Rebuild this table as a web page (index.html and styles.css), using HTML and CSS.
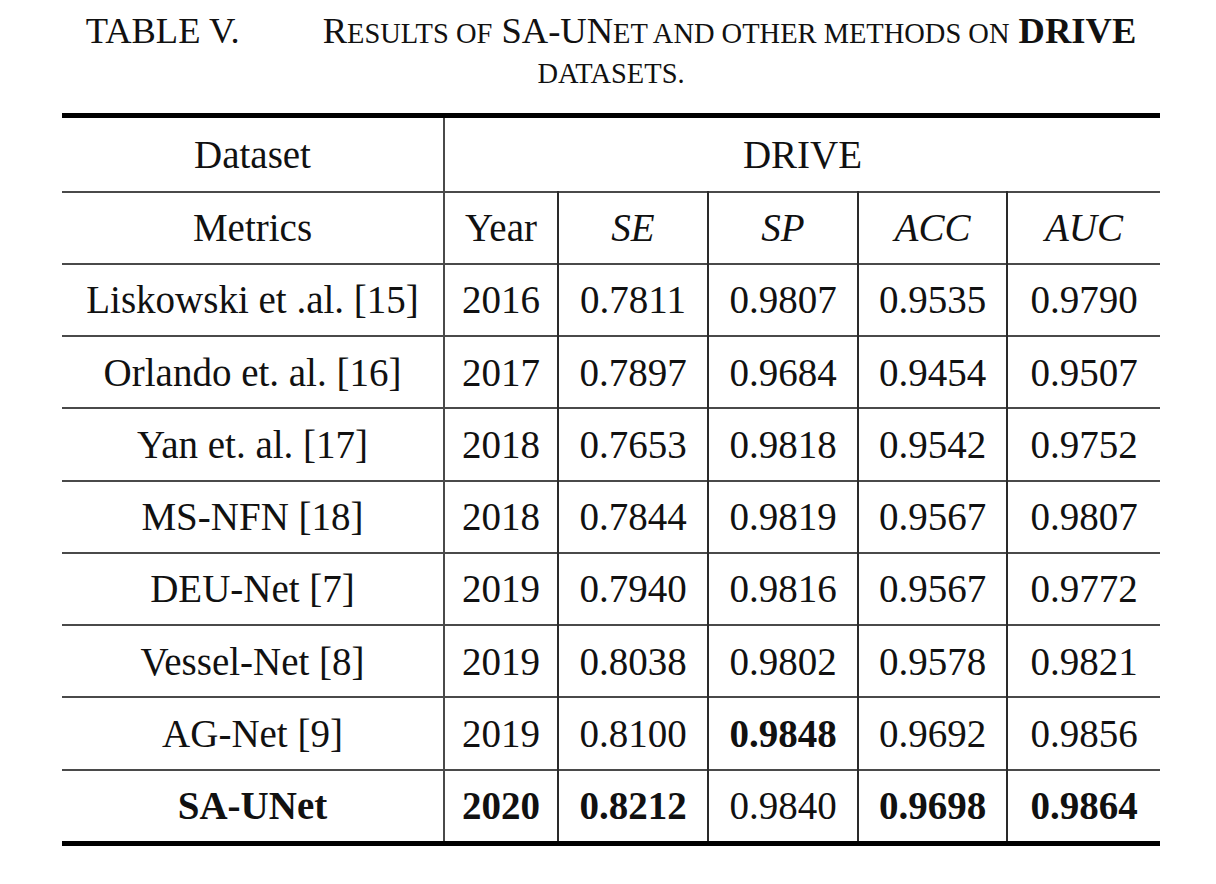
FILE: index.html
```html
<!DOCTYPE html>
<html>
<head>
<meta charset="utf-8">
<link rel="stylesheet" href="styles.css">
</head>
<body>
<div class="page">
  <div class="caption">
    <div class="cap-line"><span class="cap-label">TABLE V.</span><span class="cap-gap"></span>R<span class="sc">esults of</span> SA-UN<span class="sc">et and other methods on</span> <b>DRIVE</b></div>
    <div class="cap-line"><span class="sc">datasets.</span></div>
  </div>
  <table class="results">
    <colgroup>
      <col class="c-name"><col class="c-year"><col class="c-m"><col class="c-m"><col class="c-m3"><col class="c-m4">
    </colgroup>
    <tr class="head"><td class="vr">Dataset</td><td colspan="5">DRIVE</td></tr>
    <tr><td class="vr">Metrics</td><td class="vr2">Year</td><td class="vr2"><i>SE</i></td><td class="vr2"><i>SP</i></td><td class="vr2"><i>ACC</i></td><td><i>AUC</i></td></tr>
    <tr><td class="vr">Liskowski et .al. [15]</td><td class="vr2">2016</td><td class="vr2">0.7811</td><td class="vr2">0.9807</td><td class="vr2">0.9535</td><td>0.9790</td></tr>
    <tr><td class="vr">Orlando et. al. [16]</td><td class="vr2">2017</td><td class="vr2">0.7897</td><td class="vr2">0.9684</td><td class="vr2">0.9454</td><td>0.9507</td></tr>
    <tr><td class="vr">Yan et. al. [17]</td><td class="vr2">2018</td><td class="vr2">0.7653</td><td class="vr2">0.9818</td><td class="vr2">0.9542</td><td>0.9752</td></tr>
    <tr><td class="vr">MS-NFN [18]</td><td class="vr2">2018</td><td class="vr2">0.7844</td><td class="vr2">0.9819</td><td class="vr2">0.9567</td><td>0.9807</td></tr>
    <tr><td class="vr">DEU-Net [7]</td><td class="vr2">2019</td><td class="vr2">0.7940</td><td class="vr2">0.9816</td><td class="vr2">0.9567</td><td>0.9772</td></tr>
    <tr><td class="vr">Vessel-Net [8]</td><td class="vr2">2019</td><td class="vr2">0.8038</td><td class="vr2">0.9802</td><td class="vr2">0.9578</td><td>0.9821</td></tr>
    <tr><td class="vr">AG-Net [9]</td><td class="vr2">2019</td><td class="vr2">0.8100</td><td class="vr2"><b>0.9848</b></td><td class="vr2">0.9692</td><td>0.9856</td></tr>
    <tr><td class="vr"><b>SA-UNet</b></td><td class="vr2"><b>2020</b></td><td class="vr2"><b>0.8212</b></td><td class="vr2">0.9840</td><td class="vr2"><b>0.9698</b></td><td><b>0.9864</b></td></tr>
  </table>
</div>
</body>
</html>
```

FILE: styles.css
```css
html, body {
  margin: 0;
  padding: 0;
  background: #ffffff;
}
.page {
  padding: 12px 0 0 62px;
  font-family: "Liberation Serif", "Times New Roman", serif;
  color: #111;
}
.caption {
  width: 1098px;
  text-align: center;
  font-size: 36.5px;
  line-height: 37px;
  color: #111;
}
.cap-line {
  white-space: nowrap;
}
.cap-gap {
  display: inline-block;
  width: 83px;
}
.sc {
  font-size: 0.78em;
  text-transform: uppercase;
}
.results {
  margin-top: 21px;
  width: 1098px;
  table-layout: fixed;
  border-collapse: collapse;
  border-top: 5px solid #000;
  border-bottom: 5px solid #000;
  font-size: 39px;
}
.c-name { width: 382px; }
.c-year { width: 114px; }
.c-m { width: 150px; }
.c-m3 { width: 149px; }
.c-m4 { width: 153px; }
.results td {
  height: 70.25px;
  padding: 0;
  text-align: center;
  vertical-align: middle;
  white-space: nowrap;
  border-top: 2px solid #4a4a4a;
}
.results tr.head td {
  height: 72.5px;
  border-top: 5px solid #000;
}
.results td.vr {
  border-right: 2px solid #4a4a4a;
}
.results td.vr2 {
  border-right: 2px solid #2a2a2a;
}
.results b {
  font-weight: bold;
}
```
